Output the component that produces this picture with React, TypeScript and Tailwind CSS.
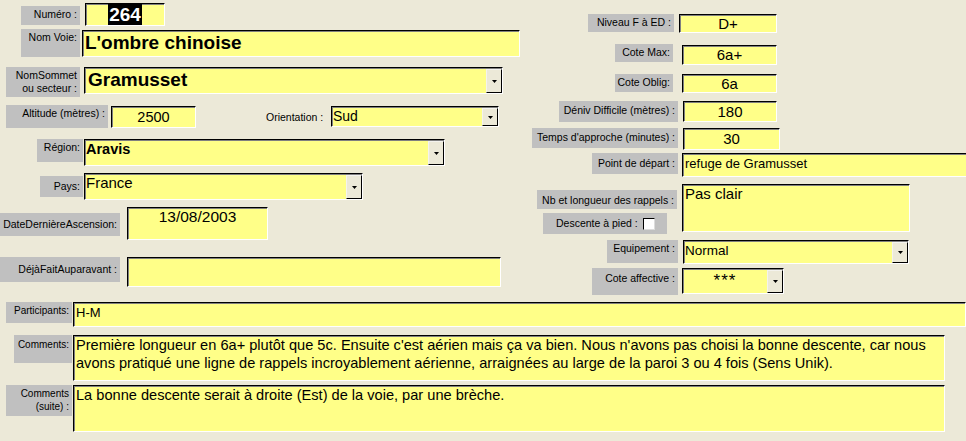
import React from 'react';

const font = { fontFamily: '"Liberation Sans", Arial, sans-serif' };

function Label({ className = '', children }: { className?: string; children: React.ReactNode }) {
  return (
    <div
      className={`bg-[#c0c0c0] text-black text-[10.5px] leading-[13px] text-right pr-[3px] pt-[2px] whitespace-nowrap shrink-0 ${className}`}
    >
      {children}
    </div>
  );
}

function Field({ className = '', children }: { className?: string; children?: React.ReactNode }) {
  return (
    <div
      className={`relative bg-[#ffff88] text-black border-t border-l border-t-black border-l-black border-b border-r border-b-white border-r-white shadow-[inset_1px_1px_0_#808080] shrink-0 overflow-hidden ${className}`}
    >
      {children}
    </div>
  );
}

function DropButton() {
  return (
    <div className="absolute right-0 top-[1px] bottom-0 w-[16px] bg-[#ece9d8] border-t border-l border-t-[#f4f3ee] border-l-[#f4f3ee] border-r border-b border-r-black border-b-black flex items-center justify-center">
      <svg width="5" height="3" viewBox="0 0 5 3">
        <path d="M0 0h5L2.5 3z" fill="#000" />
      </svg>
    </div>
  );
}

export default function App() {
  return (
    <div className="w-[966px] h-[441px] bg-[#ece9d8] overflow-hidden" style={font}>
      <div className="flex">
        {/* left column */}
        <div className="w-[525px] shrink-0 flex flex-col">
          <div className="h-[29px] flex items-start">
            <Label className="ml-[21px] mt-[6px] w-[59px] h-[19px]">Numéro :</Label>
            <Field className="ml-[5px] mt-[3px] w-[80px] h-[23px] flex justify-center">
              <span className="bg-black text-white font-bold text-[19px] leading-[22px] px-[1px]">264</span>
            </Field>
          </div>
          <div className="h-[33px] flex items-start">
            <Label className="ml-[21px] w-[59px] h-[28px]">Nom Voie:</Label>
            <Field className="ml-[2px] mt-[1px] w-[438px] h-[27px] pl-[2px]">
              <div className="font-bold text-[19px] leading-[24px]">L'ombre chinoise</div>
            </Field>
          </div>
          <div className="h-[38px] flex items-start">
            <Label className="ml-[6px] mt-[5px] w-[74px] h-[30px] leading-[12px]">
              NomSommet
              <br />
              ou secteur :
            </Label>
            <Field className="ml-[4px] mt-[5px] w-[419px] h-[27px] pl-[3px]">
              <div className="font-bold text-[19px] leading-[24px]">Gramusset</div>
              <DropButton />
            </Field>
          </div>
          <div className="h-[34px] flex items-start">
            <Label className="ml-[6px] mt-[5px] w-[102px] h-[23px]">Altitude (mètres) :</Label>
            <Field className="ml-[3px] mt-[6px] w-[85px] h-[22px] text-center">
              <div className="text-[14.5px] leading-[20px]">2500</div>
            </Field>
            <div className="ml-[70px] mt-[11px] w-[65px] text-[10.5px] leading-[13px] text-black whitespace-nowrap">Orientation :</div>
            <Field className="mt-[6px] w-[168px] h-[21px] pl-[1px]">
              <div className="text-[14px] leading-[18px]">Sud</div>
              <DropButton />
            </Field>
          </div>
          <div className="h-[36px] flex items-start">
            <Label className="ml-[37px] mt-[5px] w-[46px] h-[23px]">Région:</Label>
            <Field className="ml-[1px] mt-[5px] w-[361px] h-[27px] pl-[1px]">
              <div className="font-bold text-[14.5px] leading-[18px]">Aravis</div>
              <DropButton />
            </Field>
          </div>
          <div className="h-[33px] flex items-start">
            <Label className="ml-[40px] mt-[6px] w-[43px] h-[21px] pt-[4px]">Pays:</Label>
            <Field className="ml-[1px] mt-[3px] w-[279px] h-[27px] pl-[1px]">
              <div className="text-[15px] leading-[18px]">France</div>
              <DropButton />
            </Field>
          </div>
          <div className="h-[47px] flex items-start">
            <Label className="mt-[10px] w-[120px] h-[23px] pt-[5px] pr-[1px]">DateDernièreAscension:</Label>
            <Field className="ml-[7px] mt-[4px] w-[141px] h-[33px] text-center">
              <div className="text-[15.5px] leading-[18px]">13/08/2003</div>
            </Field>
          </div>
          <div className="h-[48px] flex items-start">
            <Label className="mt-[7px] w-[120px] h-[25px] pt-[6px]">DéjàFaitAuparavant :</Label>
            <Field className="ml-[7px] mt-[7px] w-[374px] h-[30px]" />
          </div>
        </div>

        {/* right column */}
        <div className="flex-1 flex flex-col">
          <div className="h-[42px] flex items-start">
            <Label className="ml-[63px] mt-[14px] w-[86px] h-[18px]">Niveau F à ED :</Label>
            <Field className="ml-[5px] mt-[14px] w-[98px] h-[19px] text-center">
              <div className="text-[15px] leading-[17px]">D+</div>
            </Field>
          </div>
          <div className="h-[29px] flex items-start">
            <Label className="ml-[90px] mt-[2px] w-[58px] h-[18px]">Cote Max:</Label>
            <Field className="ml-[9px] mt-[3px] w-[95px] h-[20px] text-center">
              <div className="text-[15px] leading-[18px]">6a+</div>
            </Field>
          </div>
          <div className="h-[27px] flex items-start">
            <Label className="ml-[90px] mt-[3px] w-[58px] h-[18px]">Cote Oblig:</Label>
            <Field className="ml-[9px] mt-[3px] w-[95px] h-[19px] text-center">
              <div className="text-[15px] leading-[17px]">6a</div>
            </Field>
          </div>
          <div className="h-[28px] flex items-start">
            <Label className="ml-[34px] mt-[3px] w-[119px] h-[21px] pt-[3px]">Déniv Difficile (mètres) :</Label>
            <Field className="ml-[5px] mt-[3px] w-[94px] h-[21px] text-center">
              <div className="text-[15px] leading-[19px]">180</div>
            </Field>
          </div>
          <div className="h-[25px] flex items-start">
            <Label className="ml-[7px] mt-[2px] w-[146px] h-[20px] pt-[3px]">Temps d'approche (minutes) :</Label>
            <Field className="ml-[5px] mt-[2px] w-[97px] h-[22px] text-center">
              <div className="text-[15px] leading-[19px]">30</div>
            </Field>
          </div>
          <div className="h-[31px] flex items-start">
            <Label className="ml-[67px] mt-[2px] w-[86px] h-[21px] pt-[4px]">Point de départ :</Label>
            <Field className="ml-[4px] mt-[2px] w-[290px] h-[24px] pl-[2px]">
              <div className="text-[13px] leading-[19px]">refuge de Gramusset</div>
            </Field>
          </div>
          <div className="h-[55px] flex items-start">
            <div className="w-[157px] shrink-0 flex flex-col">
              <Label className="ml-[12px] mt-[8px] w-[140px] h-[19px] pt-[4px]">Nb et longueur des rappels :</Label>
              <div className="ml-[18px] mt-[4px] w-[124px] h-[21px] bg-[#c0c0c0] flex items-center">
                <span className="text-[10.5px] leading-[13px] text-black ml-[13px] whitespace-nowrap">Descente à pied :</span>
                <span className="ml-[5px] w-[12px] h-[12px] shrink-0 bg-white border-t border-l border-t-black border-l-black border-b border-r border-b-[#dcdcdc] border-r-[#dcdcdc]" />
              </div>
            </div>
            <Field className="mt-[2px] w-[228px] h-[48px] pl-[2px]">
              <div className="text-[15px] leading-[18px]">Pas clair</div>
            </Field>
          </div>
          <div className="h-[29px] flex items-start">
            <Label className="ml-[82px] mt-[3px] w-[71px] h-[23px]">Equipement :</Label>
            <Field className="ml-[5px] mt-[3px] w-[226px] h-[24px] pl-[1px]">
              <div className="text-[13.5px] leading-[19px]">Normal</div>
              <DropButton />
            </Field>
          </div>
          <div className="h-[32px] flex items-start">
            <Label className="ml-[67px] mt-[2px] w-[86px] h-[27px] pt-[4px]">Cote affective :</Label>
            <Field className="ml-[4px] mt-[2px] w-[102px] h-[26px]">
              <div className="w-[84px] text-center text-[17px] leading-[20px] tracking-[1px] pt-[2px]">***</div>
              <DropButton />
            </Field>
          </div>
        </div>
      </div>

      {/* bottom */}
      <div className="flex flex-col">
        <div className="h-[31px] flex items-start">
          <Label className="ml-[6px] mt-[4px] w-[66px] h-[21px] text-[10px] pr-[2px]">Participants:</Label>
          <Field className="ml-[1px] mt-[4px] w-[893px] h-[25px] pl-[2px]">
            <div className="text-[13px] leading-[19px]">H-M</div>
          </Field>
        </div>
        <div className="h-[53px] flex items-start">
          <Label className="ml-[14px] mt-[6px] w-[58px] h-[28px] text-[10px] pr-[2px] pt-[3px]">Comments:</Label>
          <Field className="ml-[1px] mt-[6px] w-[872px] h-[46px] pl-[2px]">
            <div className="text-[14.6px] leading-[18px] whitespace-nowrap">
              Première longueur en 6a+ plutôt que 5c. Ensuite c'est aérien mais ça va bien. Nous n'avons pas choisi la bonne descente, car nous
              <br />
              avons pratiqué une ligne de rappels incroyablement aérienne, arraignées au large de la paroi 3 ou 4 fois (Sens Unik).
            </div>
          </Field>
        </div>
        <div className="h-[59px] flex items-start">
          <Label className="ml-[6px] mt-[3px] w-[66px] h-[31px] text-[10px] leading-[12px] pr-[2px]">
            Comments
            <br />
            (suite) :
          </Label>
          <Field className="ml-[1px] mt-[3px] w-[872px] h-[47px] pl-[2px]">
            <div className="text-[14.6px] leading-[18px] whitespace-nowrap">
              La bonne descente serait à droite (Est) de la voie, par une brèche.
            </div>
          </Field>
        </div>
      </div>
    </div>
  );
}
